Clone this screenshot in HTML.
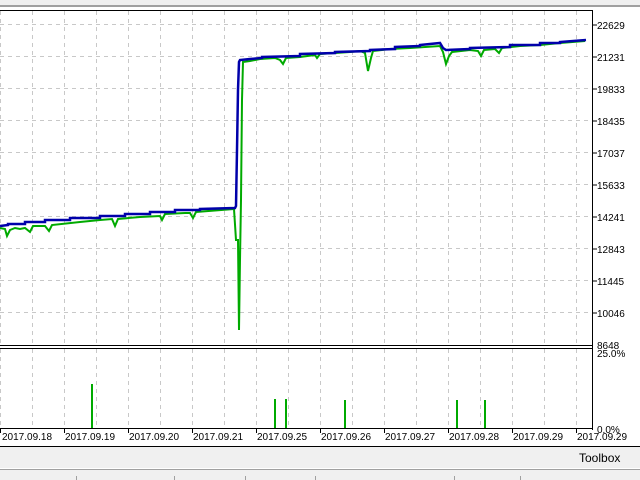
<!DOCTYPE html>
<html><head><style>
body{margin:0;width:640px;height:480px;overflow:hidden;background:#fff;font-family:"Liberation Sans",sans-serif;}
svg{display:block}
text{font-family:"Liberation Sans",sans-serif;font-size:10px;fill:#000}
</style></head><body>
<svg width="640" height="480" xmlns="http://www.w3.org/2000/svg">
<rect x="0" y="0" width="640" height="5" fill="#f0f0f0"/>
<rect x="0" y="5" width="640" height="2" fill="#a0a0a0"/>
<line x1="0" y1="10.5" x2="593" y2="10.5" stroke="#000"/>
<g stroke="#c8c8c8" stroke-dasharray="4,4" stroke-width="1">
<line x1="0.5" y1="11" x2="0.5" y2="345"/>
<line x1="32.5" y1="11" x2="32.5" y2="345"/><line x1="64.5" y1="11" x2="64.5" y2="345"/><line x1="96.5" y1="11" x2="96.5" y2="345"/><line x1="128.5" y1="11" x2="128.5" y2="345"/><line x1="160.5" y1="11" x2="160.5" y2="345"/><line x1="192.5" y1="11" x2="192.5" y2="345"/><line x1="224.5" y1="11" x2="224.5" y2="345"/><line x1="256.5" y1="11" x2="256.5" y2="345"/><line x1="288.5" y1="11" x2="288.5" y2="345"/><line x1="320.5" y1="11" x2="320.5" y2="345"/><line x1="352.5" y1="11" x2="352.5" y2="345"/><line x1="384.5" y1="11" x2="384.5" y2="345"/><line x1="416.5" y1="11" x2="416.5" y2="345"/><line x1="448.5" y1="11" x2="448.5" y2="345"/><line x1="480.5" y1="11" x2="480.5" y2="345"/><line x1="512.5" y1="11" x2="512.5" y2="345"/><line x1="544.5" y1="11" x2="544.5" y2="345"/><line x1="576.5" y1="11" x2="576.5" y2="345"/>
<line x1="0.5" y1="349" x2="0.5" y2="428"/>
<line x1="32.5" y1="349" x2="32.5" y2="428"/><line x1="64.5" y1="349" x2="64.5" y2="428"/><line x1="96.5" y1="349" x2="96.5" y2="428"/><line x1="128.5" y1="349" x2="128.5" y2="428"/><line x1="160.5" y1="349" x2="160.5" y2="428"/><line x1="192.5" y1="349" x2="192.5" y2="428"/><line x1="224.5" y1="349" x2="224.5" y2="428"/><line x1="256.5" y1="349" x2="256.5" y2="428"/><line x1="288.5" y1="349" x2="288.5" y2="428"/><line x1="320.5" y1="349" x2="320.5" y2="428"/><line x1="352.5" y1="349" x2="352.5" y2="428"/><line x1="384.5" y1="349" x2="384.5" y2="428"/><line x1="416.5" y1="349" x2="416.5" y2="428"/><line x1="448.5" y1="349" x2="448.5" y2="428"/><line x1="480.5" y1="349" x2="480.5" y2="428"/><line x1="512.5" y1="349" x2="512.5" y2="428"/><line x1="544.5" y1="349" x2="544.5" y2="428"/><line x1="576.5" y1="349" x2="576.5" y2="428"/>
<line x1="0" y1="24.5" x2="592" y2="24.5"/><line x1="0" y1="56.5" x2="592" y2="56.5"/><line x1="0" y1="88.5" x2="592" y2="88.5"/><line x1="0" y1="120.5" x2="592" y2="120.5"/><line x1="0" y1="152.5" x2="592" y2="152.5"/><line x1="0" y1="184.5" x2="592" y2="184.5"/><line x1="0" y1="216.5" x2="592" y2="216.5"/><line x1="0" y1="248.5" x2="592" y2="248.5"/><line x1="0" y1="280.5" x2="592" y2="280.5"/><line x1="0" y1="312.5" x2="592" y2="312.5"/>
</g>
<polyline fill="none" stroke="#00aa00" stroke-width="2" points="0,228 5,229 7,236 10,230 15,228 20,229 25,228 30,232 33,226 45,226 49,231 52,225 80,222 100,220 112,219 115,226 118,219 140,217 160,216 162,220 165,214 185,213 190,213 193,218 196,212 234,209 236,240 238,240 239,330 240,260 241,200 242,100 243,62 250,61 260,59 275,58 280,60 283,64 286,58 300,57 315,55 317,58 320,54 350,52 360,51 365,53 368,71 371,58 373,51 390,49 410,48 440,46 443,52 446,64 449,56 452,52 470,50 478,51 481,56 484,50 495,49 499,53 502,48 520,46 540,45 560,43 585,41"/>
<polyline fill="none" stroke="#0000aa" stroke-width="2.5" points="0,226 8,225 8,224 25,224 25,222 45,222 45,220 70,220 70,218 100,218 100,216 125,216 125,214 150,214 150,212 175,212 175,210 200,210 200,209 235,208 236,206 237,150 238,90 239,62 240,60 250,59 262,58 262,57 300,56 300,54 335,53 335,52 370,51 370,50 395,49 395,47 420,46 420,45 440,43 443,48 446,50 470,49 470,48 510,47 510,45 540,45 540,43 560,43 560,42 586,40"/>
<rect x="0" y="0" width="0" height="0"/>
<line x1="592.5" y1="10" x2="592.5" y2="430" stroke="#000"/>
<line x1="0" y1="345.5" x2="593" y2="345.5" stroke="#000"/>
<line x1="0" y1="348.5" x2="593" y2="348.5" stroke="#000"/>
<line x1="0" y1="428.5" x2="593" y2="428.5" stroke="#000"/>
<line x1="0" y1="446.5" x2="640" y2="446.5" stroke="#000"/>
<g stroke="#00aa00" stroke-width="2">
<line x1="92" y1="384" x2="92" y2="428"/><line x1="275" y1="399" x2="275" y2="428"/><line x1="286" y1="399" x2="286" y2="428"/><line x1="345" y1="400" x2="345" y2="428"/><line x1="457" y1="400" x2="457" y2="428"/><line x1="485" y1="400" x2="485" y2="428"/>
</g>
<g stroke="#000">
<line x1="593" y1="25" x2="597" y2="25"/><line x1="593" y1="57" x2="597" y2="57"/><line x1="593" y1="89" x2="597" y2="89"/><line x1="593" y1="121" x2="597" y2="121"/><line x1="593" y1="153" x2="597" y2="153"/><line x1="593" y1="185" x2="597" y2="185"/><line x1="593" y1="217" x2="597" y2="217"/><line x1="593" y1="249" x2="597" y2="249"/><line x1="593" y1="281" x2="597" y2="281"/><line x1="593" y1="313" x2="597" y2="313"/>
<line x1="0.5" y1="429" x2="0.5" y2="433"/><line x1="64.5" y1="429" x2="64.5" y2="433"/><line x1="128.5" y1="429" x2="128.5" y2="433"/><line x1="192.5" y1="429" x2="192.5" y2="433"/><line x1="256.5" y1="429" x2="256.5" y2="433"/><line x1="320.5" y1="429" x2="320.5" y2="433"/><line x1="384.5" y1="429" x2="384.5" y2="433"/><line x1="448.5" y1="429" x2="448.5" y2="433"/><line x1="512.5" y1="429" x2="512.5" y2="433"/><line x1="576.5" y1="429" x2="576.5" y2="433"/>
</g>
<g>
<text x="597" y="29">22629</text><text x="597" y="61">21231</text><text x="597" y="93">19833</text><text x="597" y="125">18435</text><text x="597" y="157">17037</text><text x="597" y="189">15633</text><text x="597" y="221">14241</text><text x="597" y="253">12843</text><text x="597" y="285">11445</text><text x="597" y="317">10046</text><text x="597" y="349">8648</text>
<text x="597" y="357">25.0%</text><text x="597" y="433">0.0%</text>
<text x="2" y="440">2017.09.18</text><text x="65" y="440">2017.09.19</text><text x="129" y="440">2017.09.20</text><text x="193" y="440">2017.09.21</text><text x="257" y="440">2017.09.25</text><text x="321" y="440">2017.09.26</text><text x="385" y="440">2017.09.27</text><text x="449" y="440">2017.09.28</text><text x="513" y="440">2017.09.29</text><text x="577" y="440">2017.09.29</text>
</g>
<rect x="0" y="447" width="640" height="33" fill="#f0f0f0"/>
<line x1="0" y1="468.5" x2="640" y2="468.5" stroke="#fff"/>
<line x1="0" y1="469.5" x2="640" y2="469.5" stroke="#a0a0a0"/>
<g stroke="#a0a0a0"><line x1="76.5" y1="476" x2="76.5" y2="480"/><line x1="174.5" y1="476" x2="174.5" y2="480"/><line x1="245.5" y1="476" x2="245.5" y2="480"/><line x1="315.5" y1="476" x2="315.5" y2="480"/><line x1="454.5" y1="476" x2="454.5" y2="480"/><line x1="520.5" y1="476" x2="520.5" y2="480"/></g>
<text x="579" y="462" style="font-size:12px">Toolbox</text>
</svg>
</body></html>
